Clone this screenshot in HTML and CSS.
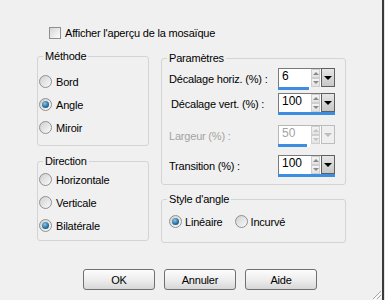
FILE: index.html
```html
<!DOCTYPE html>
<html lang="fr">
<head>
    <meta charset="UTF-8">
    <meta name="viewport" content="width=device-width, initial-scale=1.0">
    <title>Mosaïque</title>
    <link rel="stylesheet" href="styles.css">
</head>
<body>

<div class="dialog">
    <div class="preview-row">
        <span class="checkbox"></span>
        <span>Afficher l'aperçu de la mosaïque</span>
    </div>

    <div class="panels">
        <div class="col col-left">
            <fieldset class="group group-methode">
                <legend>Méthode</legend>
                <div class="radio-list">
                    <div class="radio-item"><span class="radio"></span>Bord</div>
                    <div class="radio-item"><span class="radio checked"></span>Angle</div>
                    <div class="radio-item"><span class="radio"></span>Miroir</div>
                </div>
            </fieldset>
            <fieldset class="group group-direction">
                <legend>Direction</legend>
                <div class="radio-list">
                    <div class="radio-item"><span class="radio"></span>Horizontale</div>
                    <div class="radio-item"><span class="radio"></span>Verticale</div>
                    <div class="radio-item"><span class="radio checked"></span>Bilatérale</div>
                </div>
            </fieldset>
        </div>

        <div class="col col-right">
            <fieldset class="group group-params">
                <legend>Paramètres</legend>
                <div class="param-list">
                    <div class="param-row row-1">
                        <span class="param-label">Décalage horiz. (%) :</span>
                        <div class="spin">
                            <div class="spin-edit">6</div>
                            <div class="spin-arrows"><span class="arrow up"></span><span class="arrow down"></span></div>
                            <div class="spin-drop"></div>
                            <div class="spin-bar" style="width:31px"></div>
                        </div>
                    </div>
                    <div class="param-row row-2">
                        <span class="param-label shifted">Décalage vert. (%) :</span>
                        <div class="spin">
                            <div class="spin-edit">100</div>
                            <div class="spin-arrows"><span class="arrow up"></span><span class="arrow down"></span></div>
                            <div class="spin-drop"></div>
                            <div class="spin-bar" style="width:57px"></div>
                        </div>
                    </div>
                    <div class="param-row row-3">
                        <span class="param-label disabled">Largeur (%) :</span>
                        <div class="spin disabled">
                            <div class="spin-edit">50</div>
                            <div class="spin-arrows"><span class="arrow up"></span><span class="arrow down"></span></div>
                            <div class="spin-drop"></div>
                            <div class="spin-bar" style="width:29px"></div>
                        </div>
                    </div>
                    <div class="param-row row-4">
                        <span class="param-label">Transition (%) :</span>
                        <div class="spin">
                            <div class="spin-edit">100</div>
                            <div class="spin-arrows"><span class="arrow up"></span><span class="arrow down"></span></div>
                            <div class="spin-drop"></div>
                            <div class="spin-bar" style="width:57px"></div>
                        </div>
                    </div>
                </div>
            </fieldset>
            <fieldset class="group group-style">
                <legend>Style d'angle</legend>
                <div class="style-list">
                    <div class="radio-item"><span class="radio checked"></span>Linéaire</div>
                    <div class="radio-item"><span class="radio"></span>Incurvé</div>
                </div>
            </fieldset>
        </div>
    </div>

    <div class="buttons">
        <button>OK</button>
        <button>Annuler</button>
        <button>Aide</button>
    </div>

    <svg class="grip" width="12" height="12" viewBox="0 0 12 12">
        <path d="M11 3 L3 11 M11 7 L7 11 M11 11 L11 11" stroke="#a8a8a8" stroke-width="1"/>
        <path d="M12 4 L4 12 M12 8 L8 12" stroke="#ffffff" stroke-width="1"/>
    </svg>
</div>

</body>
</html>
```

FILE: styles.css
```css
body {
    margin: 0;
    background: #e4e4e4;
    font-family: "Liberation Sans", Arial, sans-serif;
    font-size: 11px;
    letter-spacing: -0.2px;
    color: #000;
}
.dialog {
    position: relative;
    width: 384px;
    height: 300px;
    box-sizing: border-box;
    border-right: 2px solid #3a3a3a;
    background: #f0f0f0;
    overflow: hidden;
}
.preview-row {
    display: flex;
    align-items: center;
    gap: 4px;
    height: 13px;
    margin: 26px 0 0 49px;
}
.checkbox {
    width: 12px;
    height: 12px;
    box-sizing: border-box;
    border: 1px solid #8e8f8f;
    background: linear-gradient(135deg, #d6d6d6, #fbfbfb);
}
.panels {
    display: flex;
    align-items: flex-start;
    gap: 12px;
    margin: 11px 0 0 37px;
}
.col-left {
    width: 112px;
    display: flex;
    flex-direction: column;
}
.col-right {
    width: 185px;
    margin-top: 2px;
    display: flex;
    flex-direction: column;
}
.group {
    margin: 0;
    padding: 0;
    min-width: 0;
    box-sizing: border-box;
    border: 1px solid #d4d4d4;
    border-radius: 3px;
}
.group legend {
    margin-left: 5px;
    padding: 0 2px;
    line-height: 12px;
}
.group-methode {
    height: 96px;
}
.group-direction {
    height: 86px;
    margin-top: 9px;
}
.group-params {
    height: 133px;
}
.group-style {
    height: 50px;
    margin-top: 8px;
}
.radio-list {
    display: flex;
    flex-direction: column;
    gap: 10px;
    padding: 13px 0 0 1px;
}
.group-direction .radio-list {
    padding-top: 6px;
}
.radio-item {
    display: flex;
    align-items: center;
    gap: 4px;
    height: 13px;
}
.radio {
    display: flex;
    align-items: center;
    justify-content: center;
    width: 13px;
    height: 13px;
    box-sizing: border-box;
    border-radius: 50%;
    border: 1px solid #909090;
    background: linear-gradient(135deg, #d0d0d0, #fafafa);
}
.radio.checked::after {
    content: "";
    width: 7px;
    height: 7px;
    border-radius: 50%;
    background: radial-gradient(circle at 40% 35%, #8cc8ec, #236a98 60%, #15486c);
}
.param-list {
    padding-left: 7px;
}
.param-row {
    display: flex;
    align-items: center;
    height: 22px;
}
.row-1 { margin-top: 4px; }
.row-2 { margin-top: 3px; }
.row-3 { margin-top: 10px; }
.row-4 { margin-top: 8px; }
.param-label {
    width: 109px;
}
.param-label.shifted {
    padding-left: 2px;
    width: 107px;
}
.param-label.disabled {
    color: #a3a3a3;
}
.spin {
    display: grid;
    grid-template-columns: 32px 11px 14px;
    grid-template-rows: 19px 3px;
    width: 57px;
}
.spin-edit {
    grid-row: 1 / 3;
    grid-column: 1;
    background: #fff;
    border-top: 1px solid #7a7a7a;
    border-left: 1px solid #7a7a7a;
    padding-left: 3px;
    font-size: 12px;
    line-height: 14px;
    letter-spacing: 0;
}
.spin-arrows {
    grid-row: 1;
    grid-column: 2;
    display: flex;
    flex-direction: column;
    background: #fff;
    border-top: 1px solid #7a7a7a;
}
.arrow {
    flex: 1;
    display: flex;
    align-items: center;
    justify-content: center;
    margin: 0 1px;
    background: linear-gradient(#f4f4f4, #e2e2e2);
    border: 1px solid #cfcfcf;
}
.arrow.up::after {
    content: "";
    border-left: 3px solid transparent;
    border-right: 3px solid transparent;
    border-bottom: 3px solid #8a8a8a;
}
.arrow.down::after {
    content: "";
    border-left: 3px solid transparent;
    border-right: 3px solid transparent;
    border-top: 3px solid #8a8a8a;
}
.spin-drop {
    grid-row: 1;
    grid-column: 3;
    display: flex;
    align-items: center;
    justify-content: center;
    background: linear-gradient(#e6e6e6, #c8c8c8);
    border: 1px solid #5e5e5e;
}
.spin-drop::after {
    content: "";
    border-left: 4px solid transparent;
    border-right: 4px solid transparent;
    border-top: 4px solid #000;
}
.spin-bar {
    grid-row: 2;
    grid-column: 1 / 4;
    justify-self: start;
    height: 3px;
    background: #3d8de0;
    z-index: 1;
}
.spin.disabled .spin-edit {
    color: #a3a3a3;
    border-color: #b8b8b8;
}
.spin.disabled .spin-arrows {
    border-color: #b8b8b8;
}
.spin.disabled .arrow::after {
    border-top-color: #c4c4c4;
    border-bottom-color: #c4c4c4;
}
.spin.disabled .spin-drop {
    background: #efefef;
    border-color: #bdbdbd;
}
.spin.disabled .spin-drop::after {
    border-top-color: #bdbdbd;
}
.style-list {
    display: flex;
    align-items: center;
    gap: 12px;
    padding: 10px 0 0 7px;
}
.style-list .radio-item {
    gap: 3px;
}
.buttons {
    display: flex;
    gap: 9px;
    margin: 26px 0 0 83px;
}
button {
    width: 72px;
    height: 21px;
    padding: 0;
    border: 1px solid #707070;
    border-radius: 3px;
    background: linear-gradient(#fdfdfd, #ececec 55%, #d7d7d7);
    font-family: "Liberation Sans", Arial, sans-serif;
    font-size: 11px;
    letter-spacing: -0.2px;
    color: #000;
}
.grip {
    position: absolute;
    right: 0;
    bottom: 0;
}
```
